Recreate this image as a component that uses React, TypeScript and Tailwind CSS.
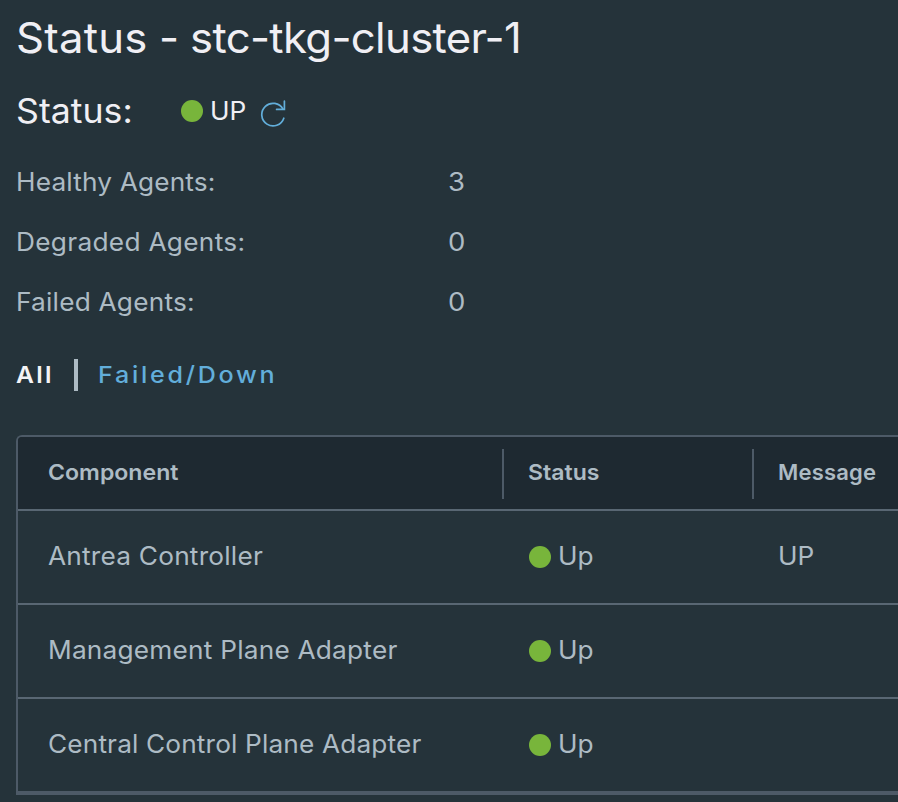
const agents = [
  { label: 'Healthy Agents:', count: 3, spacing: 'tracking-[0.15px]' },
  { label: 'Degraded Agents:', count: 0, spacing: 'tracking-[0.28px]' },
  { label: 'Failed Agents:', count: 0, spacing: 'tracking-[0.2px]' },
];

const rows = [
  { name: 'Antrea Controller', status: 'Up', message: 'UP', spacing: 'tracking-[0.2px]' },
  { name: 'Management Plane Adapter', status: 'Up', message: '', spacing: 'tracking-[0.2px]' },
  { name: 'Central Control Plane Adapter', status: 'Up', message: '', spacing: 'tracking-[0.13px]' },
];

function Dot() {
  return <span className="size-[22px] shrink-0 rounded-full bg-[#78b53b]" />;
}

function RefreshIcon() {
  return (
    <svg className="size-[28px]" viewBox="0 0 28 28" fill="none" stroke="#62aeda" strokeWidth="1.7">
      <path d="M23.8 18.2A11.3 11.3 0 1 1 23 9.2" strokeLinecap="round" />
      <path d="M24.4 1.2V9.4H16.6" strokeLinecap="round" />
    </svg>
  );
}

export default function App() {
  return (
    <div className="h-[802px] w-full overflow-hidden bg-[#25333a] pl-4 font-['Inter',sans-serif] text-[25px] text-[#adbbc4]">
      <h1 className="h-[76px] origin-left scale-x-104 text-[42px] leading-[76px] font-normal tracking-[-0.65px] whitespace-nowrap text-[#f0eff4]">
        <span className="tracking-[0.2px]">Status</span> - stc-tkg-cluster-1
      </h1>

      <div className="flex h-[70px] items-center text-[#f0eff4]">
        <h2 className="w-[165px] text-[34px] leading-[70px] font-normal">
          <span className="inline-block origin-left scale-x-105">Status:</span>
        </h2>
        <Dot />
        <span className="ml-[7px] w-[50px] origin-left scale-x-105 leading-[70px] font-normal">UP</span>
        <button aria-label="Refresh" className="mt-[6px]">
          <RefreshIcon />
        </button>
      </div>

      <dl className="mt-[7px]">
        {agents.map((agent) => (
          <div key={agent.label} className="flex h-[60px] items-center">
            <dt className={`w-[432px] origin-left scale-x-105 ${agent.spacing}`}>{agent.label}</dt>
            <dd className="origin-left scale-x-110">{agent.count}</dd>
          </div>
        ))}
      </dl>

      <nav className="mt-[26px] flex h-8 items-center text-[23px]">
        <button className="w-[58px] text-left font-semibold text-[#f4f4f6]">
          <span className="inline-block origin-left scale-x-107 tracking-[2.2px]">All</span>
        </button>
        <span className="h-8 w-1 bg-[#adbbc4]" />
        <button className="ml-5 origin-left scale-x-109 font-medium tracking-[2.5px] text-[#62aeda]">Failed/Down</button>
      </nav>

      <div className="mt-11 h-[360px] overflow-hidden rounded-tl-md border-t-2 border-b-4 border-l-2 border-[#4d5a67]">
        <div className="flex h-[72px] items-center bg-[#1e2931] pt-px text-[22px] font-semibold">
          <div className="w-[484px] pb-[3px] pl-[30px]">
            <span className="inline-block origin-left scale-x-105">Component</span>
          </div>
          <div className="flex h-[50px] w-[250px] items-center border-l-2 border-[#4d5a67] pb-[3px] pl-6">
            <span className="origin-left scale-x-105">Status</span>
          </div>
          <div className="flex h-[50px] grow items-center border-l-2 border-[#4d5a67] pb-[3px] pl-6 tracking-[0.2px]">Message</div>
        </div>
        {rows.map((row) => (
          <div key={row.name} className="flex h-[94px] items-center border-t-2 border-[#596773] pb-px">
            <div className="w-[511px] pl-[30px]">
              <span className={`inline-block origin-left scale-x-105 ${row.spacing}`}>{row.name}</span>
            </div>
            <div className="flex w-[249px] items-center gap-[7px]">
              <Dot />
              <span className="origin-left scale-x-105">{row.status}</span>
            </div>
            <div className="origin-left scale-x-105">{row.message}</div>
          </div>
        ))}
      </div>
    </div>
  );
}
